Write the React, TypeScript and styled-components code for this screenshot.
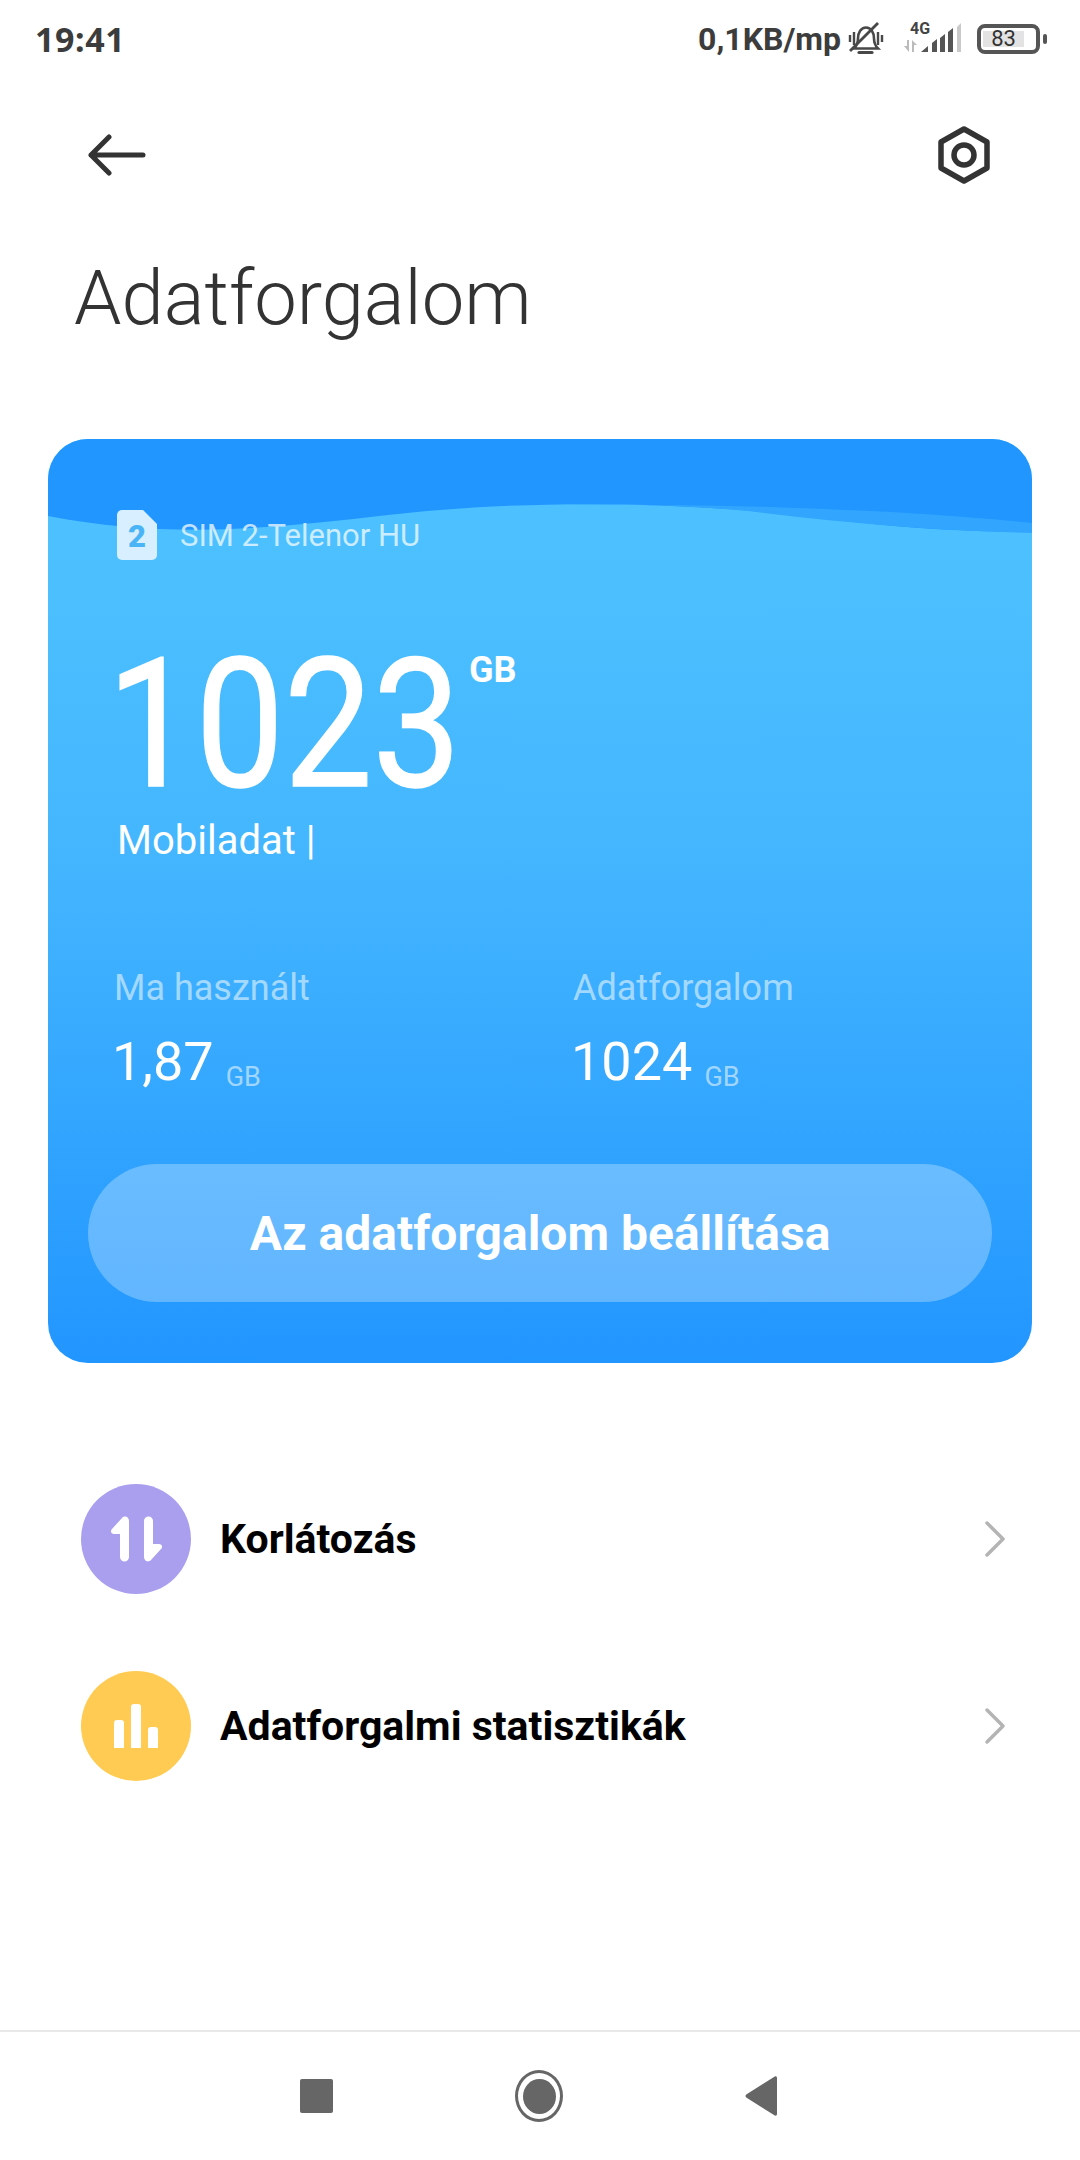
import React from "react";
import styled, { createGlobalStyle } from "styled-components";

const GlobalStyle = createGlobalStyle`
  html, body {
    margin: 0;
    padding: 0;
    background: #fff;
    font-family: Roboto, "Liberation Sans", sans-serif;
  }
`;

const Page = styled.div`
  width: 1080px;
  height: 2160px;
  display: flex;
  flex-direction: column;
  background: #fff;
  overflow: hidden;
`;

const StatusBar = styled.div`
  height: 78px;
  padding: 0 40px 0 35px;
  display: flex;
  align-items: center;
  color: #3c3c3c;
  box-sizing: border-box;
`;

const Clock = styled.div`
  font-family: "Noto Sans", sans-serif;
  font-weight: 700;
  font-size: 34px;
  letter-spacing: 0.6px;
  flex: 1;
`;

const Speed = styled.div`
  font-weight: 700;
  font-size: 32px;
  margin-right: 7px;
`;

const SignalBox = styled.div`
  position: relative;
  width: 60px;
  height: 40px;
  margin: 0 14px 0 19px;
`;

const NetworkLabel = styled.span`
  position: absolute;
  left: 7px;
  top: 0;
  font-size: 16px;
  font-weight: 700;
  color: #444;
`;

const Battery = styled.div`
  position: relative;
  width: 63px;
  height: 30px;
  border: 4px solid #555;
  border-radius: 8px;
  box-sizing: border-box;
  display: flex;
  align-items: center;
  padding-left: 2px;
  &::after {
    content: "";
    position: absolute;
    right: -11px;
    top: 6px;
    width: 4px;
    height: 10px;
    border-radius: 2px;
    background: #555;
  }
`;

const BatteryLevel = styled.span`
  height: 16px;
  width: 41px;
  background: #e3e3e3;
  font-size: 22px;
  line-height: 16px;
  text-align: center;
  color: #333;
`;

const TopBar = styled.div`
  height: 154px;
  padding: 0 90px 0 88px;
  display: flex;
  align-items: center;
  justify-content: space-between;
  box-sizing: border-box;
`;

const Title = styled.h1`
  margin: 21px 0 0;
  padding-left: 74px;
  font-weight: 300;
  font-size: 76px;
  line-height: 90px;
  color: #333;
`;

const Card = styled.section`
  position: relative;
  margin: 96px 48px 0;
  height: 924px;
  border-radius: 40px;
  overflow: hidden;
  background: linear-gradient(180deg, #4dc1ff 10%, #44b6ff 45%, #2296ff 100%);
  box-sizing: border-box;
  padding: 71px 40px 61px;
  color: #fff;
  display: flex;
  flex-direction: column;
`;

const Waves = styled.svg`
  position: absolute;
  left: 0;
  top: 0;
`;

const CardBody = styled.div`
  position: relative;
  padding-left: 29px;
`;

const SimRow = styled.div`
  display: flex;
  align-items: center;
  gap: 23px;
  font-size: 31px;
  color: rgba(255, 255, 255, 0.72);
`;

const UsageRow = styled.div`
  display: flex;
  align-items: flex-start;
  margin-top: 60px;
  height: 190px;
`;

/* the big figure is narrower than Roboto's digits, so it gets squeezed */
const UsageValue = styled.div`
  width: 362px;
  margin: 17px 0 0 -10px;
  font-size: 180px;
  line-height: 176px;
  transform: scaleX(0.875);
  transform-origin: left center;
  -webkit-text-stroke: 1.5px #fff;
`;

const UsageUnit = styled.div`
  font-size: 36px;
  font-weight: 700;
  margin-top: 29px;
`;

const UsageCaption = styled.div`
  font-size: 40px;
  line-height: 46px;
  margin-top: 8px;
`;

const Stats = styled.div`
  display: grid;
  grid-template-columns: 459px 1fr;
  margin-top: 104px;
  margin-left: -3px;
`;

const StatLabel = styled.div`
  font-size: 36px;
  line-height: 40px;
  color: rgba(255, 255, 255, 0.55);
`;

const StatValue = styled.div`
  display: flex;
  align-items: flex-end;
  gap: 12px;
  margin-top: 22px;
  margin-left: -2px;
  font-size: 54px;
  line-height: 64px;
`;

const StatUnit = styled.span`
  font-size: 27px;
  line-height: 34px;
  color: rgba(255, 255, 255, 0.55);
`;

const CardButton = styled.button`
  position: relative;
  flex: none;
  margin-top: auto;
  height: 138px;
  border: none;
  border-radius: 69px;
  background: rgba(255, 255, 255, 0.28);
  color: #fff;
  font-family: Roboto, sans-serif;
  font-weight: 700;
  font-size: 48px;
`;

const Menu = styled.div`
  margin-top: 121px;
  padding: 0 74px 0 81px;
  display: flex;
  flex-direction: column;
  gap: 77px;
`;

const MenuRow = styled.div`
  display: flex;
  align-items: center;
  height: 110px;
`;

const MenuIcon = styled.div<{ $color: string }>`
  width: 110px;
  height: 110px;
  border-radius: 50%;
  background: ${(p) => p.$color};
  display: flex;
  align-items: center;
  justify-content: center;
`;

const MenuLabel = styled.div`
  flex: 1;
  margin-left: 29px;
  font-weight: 700;
  font-size: 41px;
  color: #000;
`;

const NavBar = styled.div`
  margin-top: auto;
  height: 130px;
  border-top: 2px solid #e8e8e8;
  box-sizing: border-box;
  padding: 0 303px 0 300px;
  display: flex;
  align-items: center;
  justify-content: space-between;
`;

const NavSquare = styled.div`
  width: 33px;
  height: 34px;
  border-radius: 2px;
  background: #666;
`;

const NavHome = styled.div`
  width: 48px;
  height: 52px;
  border: 3.5px solid #666;
  border-radius: 50%;
  box-sizing: border-box;
  display: flex;
  align-items: center;
  justify-content: center;
  &::after {
    content: "";
    width: 33px;
    height: 35px;
    border-radius: 50%;
    background: #666;
  }
`;

const BellOff = () => (
  <svg width="36" height="36" viewBox="0 0 36 36" fill="none" stroke="#484848" strokeWidth="2.6">
    <path d="M6 27.5c3-3 4-6 4-10 0-6 3-11 8-11s8 5 8 11c0 4 1 7 4 10z" />
    <path d="M11 31.5h13" strokeLinecap="round" strokeWidth="3.2" />
    <path d="M6 11v13M2 14v7M30 11v13M34 14v7" strokeWidth="2.4" />
    <path d="M2 30L30 2" strokeWidth="2.8" />
  </svg>
);

const SignalBars = () => (
  <svg width="60" height="40" viewBox="0 0 60 40" fill="#555">
    <path d="M18 33l7-6v6z" />
    <path d="M29 33V24l5-4v13z" />
    <path d="M37 33V19l5-4v18z" />
    <path d="M45 33V13l5-4v24z" />
    <path d="M54 33V8l4-4v29z" fill="#c9c9c9" />
    <path d="M4 21h2v12L1 27h3zM9 21v12h2v-7h3z" fill="#bbb" />
  </svg>
);

const BackArrow = () => (
  <svg width="58" height="42" viewBox="0 0 58 42" fill="none" stroke="#333" strokeWidth="5" strokeLinecap="round" strokeLinejoin="round">
    <path d="M55 21H3M21 3L3 21l18 18" />
  </svg>
);

const GearNut = () => (
  <svg width="52" height="58" viewBox="0 0 52 58" fill="none" stroke="#333" strokeWidth="5.5" strokeLinejoin="round">
    <path d="M26 3l23 13v26L26 55 3 42V16z" />
    <circle cx="26" cy="29" r="10" />
  </svg>
);

const SimIcon = () => (
  <svg width="40" height="50" viewBox="0 0 40 50">
    <path d="M5 0h21l14 14v31a5 5 0 0 1-5 5H5a5 5 0 0 1-5-5V5a5 5 0 0 1 5-5z" fill="#d8efff" />
    <text x="20" y="37" textAnchor="middle" fontFamily="Roboto, sans-serif" fontWeight="900" fontSize="31" fill="#4ab5f6">
      2
    </text>
  </svg>
);

const Chevron = () => (
  <svg width="22" height="38" viewBox="0 0 22 38" fill="none" stroke="#b4b4b4" strokeWidth="3.5" strokeLinecap="round" strokeLinejoin="round">
    <path d="M3 3l16 16L3 35" />
  </svg>
);

const limitArrow = "M18 5V41a4.5 4.5 0 0 1-9 0V18H3C0 18-1 15 1 13L11 2c3-3 7-1 7 3z";

const LimitIcon = () => (
  <svg width="51" height="46" viewBox="0 0 51 46" fill="#fff">
    <path d={limitArrow} />
    <path d={limitArrow} transform="rotate(180 25.5 23)" />
  </svg>
);

const StatsIcon = () => (
  <svg width="44" height="44" viewBox="0 0 44 44" fill="#fff">
    <path d="M0 19a3 3 0 0 1 3-3h4a3 3 0 0 1 3 3v25H0z" />
    <path d="M17 3a3 3 0 0 1 3-3h4a3 3 0 0 1 3 3v41H17z" />
    <path d="M34 26a3 3 0 0 1 3-3h4a3 3 0 0 1 3 3v18H34z" />
  </svg>
);

const BackTriangle = () => (
  <svg width="32" height="40" viewBox="0 0 32 40" fill="#666">
    <path d="M32 2v36c0 2-2 2-3 1L2 22c-2-1-2-3 0-4L29 1c1-1 3-1 3 1z" />
  </svg>
);

const App = () => {
  return (
    <Page>
      <GlobalStyle />
      <StatusBar>
        <Clock>19:41</Clock>
        <Speed>0,1KB/mp</Speed>
        <BellOff />
        <SignalBox>
          <SignalBars />
          <NetworkLabel>4G</NetworkLabel>
        </SignalBox>
        <Battery>
          <BatteryLevel>83</BatteryLevel>
        </Battery>
      </StatusBar>
      <TopBar>
        <BackArrow />
        <GearNut />
      </TopBar>
      <Title>Adatforgalom</Title>
      <Card>
        <Waves width="984" height="100" viewBox="0 0 984 100">
          <rect width="984" height="100" fill="#2196ff" />
          <path d="M0 77C120 100 220 90 340 76 C480 60 640 62 780 80 C860 90 930 93 984 93V100H0z" fill="#4dc1ff" />
          <path d="M500 66C660 64 850 70 984 84V94C900 92 800 85 700 72 C640 66 560 64 500 66z" fill="#32a6ff" />
        </Waves>
        <CardBody>
          <SimRow>
            <SimIcon />
            SIM 2-Telenor HU
          </SimRow>
          <UsageRow>
            <UsageValue>1023</UsageValue>
            <UsageUnit>GB</UsageUnit>
          </UsageRow>
          <UsageCaption>Mobiladat |</UsageCaption>
          <Stats>
            <div>
              <StatLabel>Ma használt</StatLabel>
              <StatValue>
                1,87 <StatUnit>GB</StatUnit>
              </StatValue>
            </div>
            <div>
              <StatLabel>Adatforgalom</StatLabel>
              <StatValue>
                1024 <StatUnit>GB</StatUnit>
              </StatValue>
            </div>
          </Stats>
        </CardBody>
        <CardButton>Az adatforgalom beállítása</CardButton>
      </Card>
      <Menu>
        <MenuRow>
          <MenuIcon $color="#a99fee">
            <LimitIcon />
          </MenuIcon>
          <MenuLabel>Korlátozás</MenuLabel>
          <Chevron />
        </MenuRow>
        <MenuRow>
          <MenuIcon $color="#ffcb52">
            <StatsIcon />
          </MenuIcon>
          <MenuLabel>Adatforgalmi statisztikák</MenuLabel>
          <Chevron />
        </MenuRow>
      </Menu>
      <NavBar>
        <NavSquare />
        <NavHome />
        <BackTriangle />
      </NavBar>
    </Page>
  );
};

export default App;
